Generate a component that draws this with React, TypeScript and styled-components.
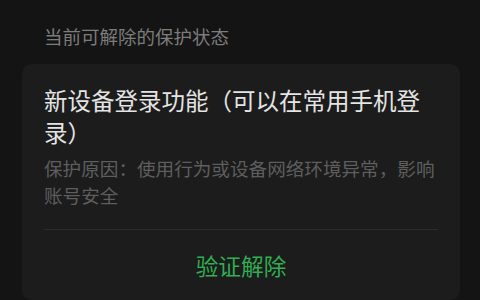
import React from "react";
import styled, { createGlobalStyle } from "styled-components";

const Global = createGlobalStyle`
  html, body {
    margin: 0;
    padding: 0;
    background: #141414;
  }
  body {
    font-family: "Noto Sans CJK SC", "Noto Sans", sans-serif;
    width: 480px;
    height: 300px;
    overflow: hidden;
  }
`;

const Page = styled.div`
  display: flex;
  flex-direction: column;
  padding: 23px 20px 0 22px;
  height: 300px;
  box-sizing: border-box;
`;

const SectionTitle = styled.div`
  font-size: 18.5px;
  line-height: 26px;
  color: #7c7c7c;
  padding-left: 22px;
`;

const Card = styled.div`
  margin-top: 15px;
  background: #1c1c1c;
  border-radius: 10px;
  padding: 20px 22px 0 22px;
  display: flex;
  flex-direction: column;
  flex: 1;
`;

const CardTitle = styled.div`
  font-size: 23.5px;
  line-height: 32px;
  color: #e4e4e4;
`;

const Reason = styled.div`
  margin-top: 6px;
  font-size: 18.6px;
  line-height: 27px;
  color: #5e5e5e;
`;

const Divider = styled.div`
  margin-top: 21px;
  height: 1px;
  background: #2c2c2c;
`;

const Action = styled.div`
  padding-top: 21px;
  text-align: center;
  font-size: 22.7px;
  line-height: 30px;
  color: #2fae52;
`;

export default function App() {
  return (
    <>
      <Global />
      <Page>
        <SectionTitle>当前可解除的保护状态</SectionTitle>
        <Card>
          <CardTitle>新设备登录功能（可以在常用手机登录）</CardTitle>
          <Reason>保护原因：使用行为或设备网络环境异常，影响账号安全</Reason>
          <Divider />
          <Action>验证解除</Action>
        </Card>
      </Page>
    </>
  );
}
